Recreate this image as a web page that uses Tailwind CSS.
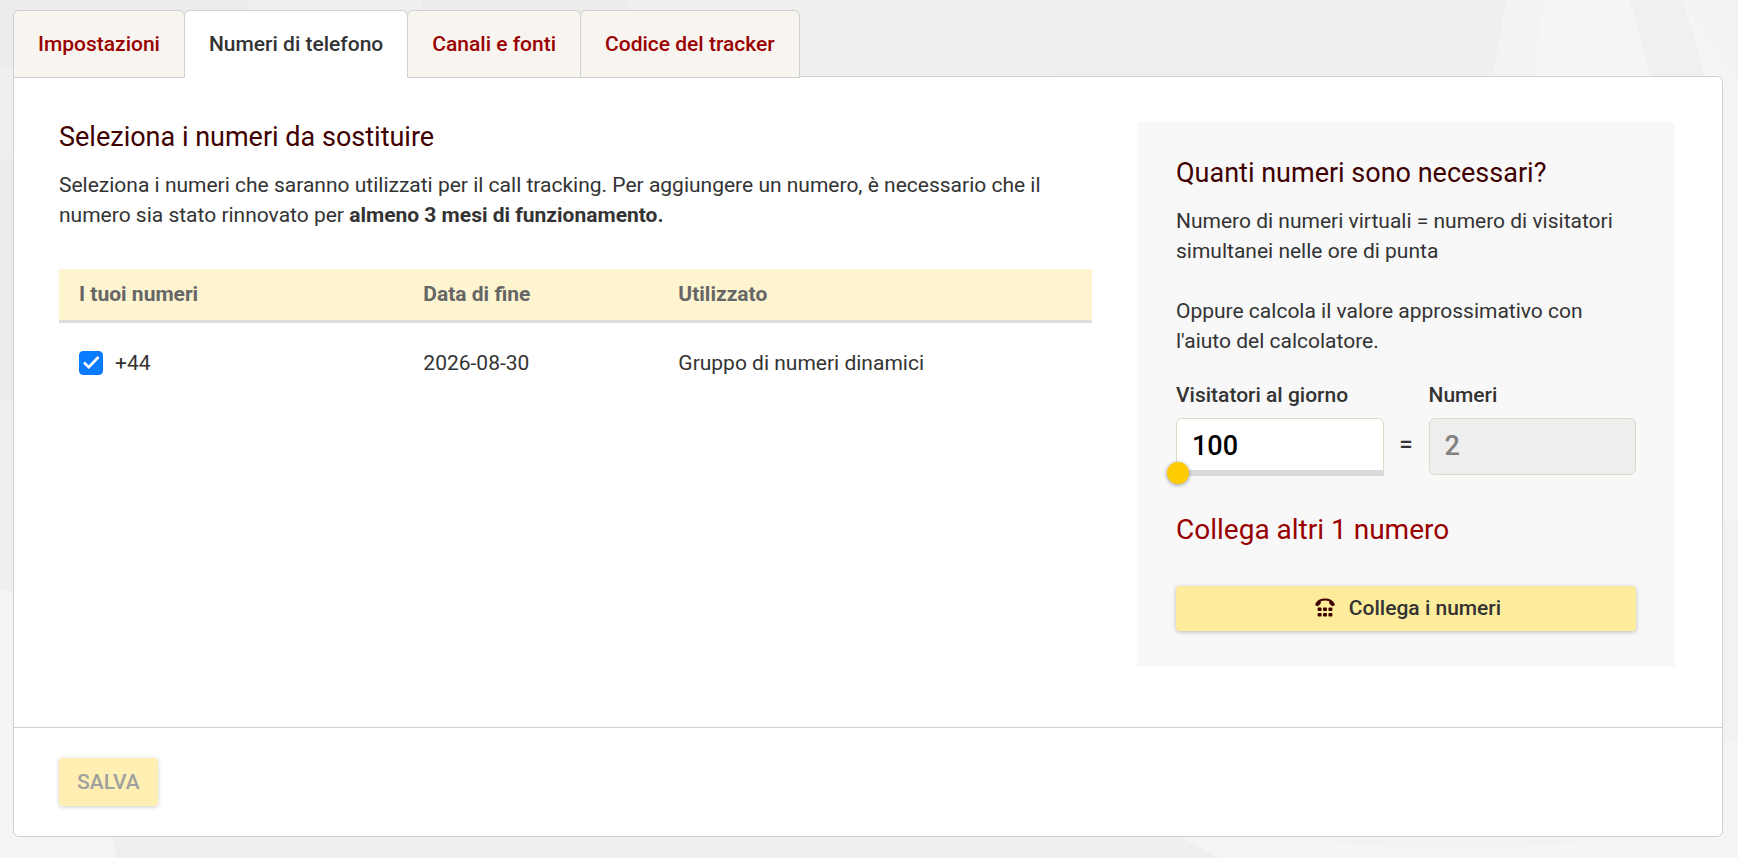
<!DOCTYPE html>
<html lang="it">
<head>
    <meta charset="UTF-8">
    <meta name="viewport" content="width=device-width, initial-scale=1.0">
    <title>Call tracking - Numeri di telefono</title>
    <script src="https://cdn.jsdelivr.net/npm/@tailwindcss/browser@4"></script>
</head>
<body class="relative min-h-screen bg-[#efefef] font-[Roboto,sans-serif] text-[21px] leading-[30px] text-[#333]">
    <!-- Page backdrop -->
    <svg class="absolute inset-0 -z-10 h-full w-full" viewBox="0 0 1738 858" preserveAspectRatio="none" aria-hidden="true">
        <path fill="#ececec" d="M0 0H250L225 68H0zM0 160L20 158V402L0 398z"/>
        <path fill="#ececec" d="M422 0H624L632 12H422z"/>
        <path fill="#f5f5f5" d="M0 590L20 593V836H111L117 858H0z"/>
        <path fill="#eeeeee" d="M1060 0H1171L1236 77H1060z"/>
        <path fill="#f3f3f3" d="M1506 0H1738V120H1493V77z"/>
        <path fill="#f5f5f5" d="M1543 0H1630L1651 77H1534zM1683 0L1738 82V522L1715 520L1705 77z"/>
        <path fill="#f0f0f0" d="M1630 0H1683L1705 77H1651z"/>
        <path fill="#f2f2f2" d="M1715 520L1738 522V738L1715 746z"/>
        <path fill="#f5f5f5" d="M1715 746L1738 738V858H1219L1180 836H1715z"/>
        <path fill="#f2f2f2" d="M1300 836Q1450 862 1620 836z"/>
    </svg>

    <main class="pt-[10px] pr-[15px] pb-[21px] pl-[13px]">
        <!-- Tabs -->
        <nav class="relative z-10 -mb-[2px] flex font-medium">
            <a href="#" class="rounded-t-md border border-[#d0d0d0] bg-[#f8f4f0] px-6 pt-[18px] pb-[18px] text-[#900]">Impostazioni</a>
            <a href="#" aria-current="page" class="-ml-px rounded-t-md border border-b-0 border-[#d0d0d0] bg-white px-6 pt-[18px] pb-[19px]">Numeri di telefono</a>
            <a href="#" class="-ml-px rounded-t-md border border-[#d0d0d0] bg-[#f8f4f0] px-6 pt-[18px] pb-[18px] text-[#900]">Canali e fonti</a>
            <a href="#" class="-ml-px rounded-t-md border border-[#d0d0d0] bg-[#f8f4f0] px-6 pt-[18px] pb-[18px] text-[#900]">Codice del tracker</a>
        </nav>

        <form class="rounded-b-md rounded-tr-md border border-[#d0d0d0] bg-white">
            <div class="flex gap-[45px] pt-[45px] pr-[47px] pb-[60px] pl-[45px]">
                <!-- Numbers -->
                <section class="flex-1">
                    <h2 class="text-[27px] text-[#400000]">Seleziona i numeri da sostituire</h2>
                    <p class="mt-[18px]">Seleziona i numeri che saranno utilizzati per il call tracking. Per aggiungere un numero, è necessario che il numero sia stato rinnovato per <b class="font-bold">almeno 3 mesi di funzionamento.</b></p>
                    <table class="mt-[39px] w-full table-fixed text-left">
                        <thead>
                            <tr class="border-b-3 border-[#ddd] bg-[#fef5d0] text-[#666]">
                                <th class="w-1/3 pt-[10px] pb-[11px] pl-5 font-bold">I tuoi numeri</th>
                                <th class="w-[255px] pt-[10px] pb-[11px] pl-5 font-bold">Data di fine</th>
                                <th class="pt-[10px] pb-[11px] pl-5 font-bold">Utilizzato</th>
                            </tr>
                        </thead>
                        <tbody>
                            <tr>
                                <td class="py-[25px] pl-5">
                                    <label class="flex items-center gap-3">
                                        <span class="relative h-6 w-6">
                                            <input type="checkbox" checked class="peer block h-6 w-6 appearance-none rounded-[4px] border border-[#ccc] bg-white checked:border-[#0a7aff] checked:bg-[#0a7aff]">
                                            <svg class="pointer-events-none absolute inset-0 hidden peer-checked:block" viewBox="0 0 24 24" fill="none" stroke="#fff" stroke-width="2.6"><path d="M5 11.5l4.8 4.7L19.5 6"/></svg>
                                        </span>
                                        +44
                                    </label>
                                </td>
                                <td class="py-[25px] pl-5">2026-08-30</td>
                                <td class="py-[25px] pl-5">Gruppo di numeri dinamici</td>
                            </tr>
                        </tbody>
                    </table>
                </section>

                <!-- Calculator -->
                <aside class="w-[538px] bg-[#f8f8f8] px-[39px] pt-9 pb-9">
                    <h2 class="text-[27px] text-[#400000]">Quanti numeri sono necessari?</h2>
                    <p class="mt-[18px]">Numero di numeri virtuali = numero di visitatori simultanei nelle ore di punta</p>
                    <p class="mt-[30px]">Oppure calcola il valore approssimativo con l'aiuto del calcolatore.</p>
                    <div class="mt-6 flex items-end">
                        <div class="flex-1">
                            <label for="visitors" class="block font-medium">Visitatori al giorno</label>
                            <div class="relative mt-2">
                                <input id="visitors" type="text" value="100" class="block h-[57px] w-full rounded-md border border-[#e0d8c8] bg-white px-[15px] pb-[2px] text-[27px] font-medium text-black">
                                <input type="range" min="100" max="10000" value="100" aria-label="Visitatori al giorno" class="absolute right-0 -bottom-[9px] -left-[9px] h-[22px] appearance-none bg-[linear-gradient(#dadada,#dadada)] bg-[length:calc(100%-10px)_6px] bg-right bg-no-repeat [&::-webkit-slider-thumb]:h-[22px] [&::-webkit-slider-thumb]:w-[22px] [&::-webkit-slider-thumb]:appearance-none [&::-webkit-slider-thumb]:rounded-full [&::-webkit-slider-thumb]:bg-[#fc0] [&::-webkit-slider-thumb]:shadow-[0_1px_4px_rgba(0,0,0,0.4)]">
                            </div>
                        </div>
                        <span class="w-[45px] pb-4 text-center text-[24px] font-medium">=</span>
                        <div class="flex-1">
                            <label for="numbers" class="block font-medium">Numeri</label>
                            <input id="numbers" type="text" value="2" disabled class="mt-2 block h-[57px] w-full rounded-md border border-[#e0d8c8] bg-[#eee] px-[15px] pb-[2px] text-[27px] font-medium text-[#808080]">
                        </div>
                    </div>
                    <p class="mt-10 text-[28px] text-[#900]">Collega altri 1 numero</p>
                    <button type="button" class="mt-[41px] flex h-[45px] w-full items-center justify-center gap-[14px] rounded-[4px] bg-[#fdec9c] pb-[2px] pl-1 font-medium shadow-[0_1px_4px_rgba(0,0,0,0.25)]">
                        <svg class="h-[19px] w-5" viewBox="0 0 20 19" fill="#400000" aria-hidden="true">
                            <path d="M0.3 6C2 2.3 5.5 0.5 10 0.5S18 2.3 19.7 6C20 6.6 19.8 7 19.3 7.4L17.9 8.1C17.4 8.3 16.9 8.2 16.5 7.8L14.5 5.8C14.2 5.4 14.1 5 14.2 4.4L14.3 3.2C11.5 2.3 8.5 2.3 5.7 3.2L5.8 4.4C5.9 5 5.8 5.4 5.5 5.8L3.5 7.8C3.1 8.2 2.6 8.3 2.1 8.1L0.7 7.4C0.2 7 0 6.6 0.3 6z"/>
                            <rect x="2.6" y="9.5" width="4" height="3.4" rx="1"/>
                            <rect x="8" y="9.5" width="4" height="3.4" rx="1"/>
                            <rect x="13.4" y="9.5" width="4" height="3.4" rx="1"/>
                            <rect x="2.6" y="15" width="4" height="3.4" rx="1"/>
                            <rect x="8" y="15" width="4" height="3.4" rx="1"/>
                            <rect x="13.4" y="15" width="4" height="3.4" rx="1"/>
                        </svg>
                        Collega i numeri
                    </button>
                </aside>
            </div>

            <!-- Footer -->
            <div class="border-t border-[#d0d0d0] px-[45px] py-[30px]">
                <button type="submit" disabled class="block h-12 rounded-[4px] bg-[#ffefb3] px-[18px] font-medium text-[#a0a0a0] shadow-[0_1px_4px_rgba(0,0,0,0.2)]">SALVA</button>
            </div>
        </form>
    </main>
</body>
</html>
